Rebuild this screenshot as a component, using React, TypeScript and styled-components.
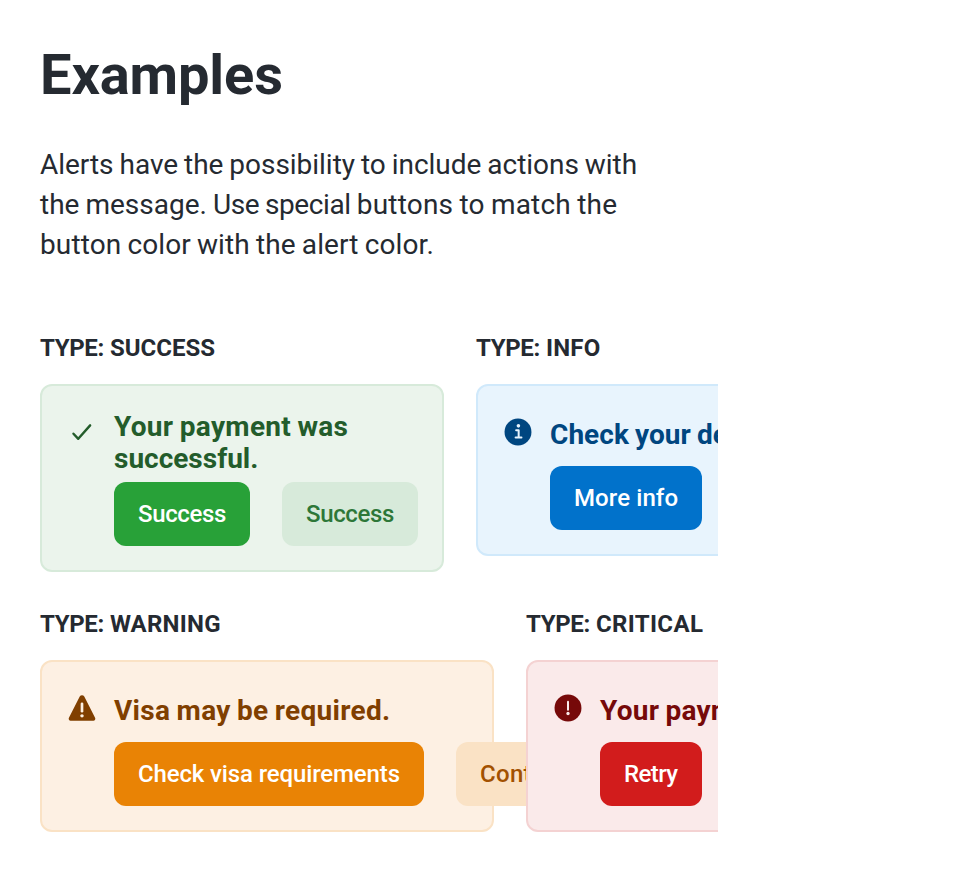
import React from 'react';
import styled, { createGlobalStyle, css } from 'styled-components';

type Kind = 'success' | 'info' | 'warning' | 'critical';

const palette: Record<
  Kind,
  { light: string; edge: string; normal: string; dark: string; darker: string }
> = {
  success: { light: '#EBF4EC', edge: '#D7EADA', normal: '#28A138', dark: '#2D7738', darker: '#235C2B' },
  info: { light: '#E8F4FD', edge: '#D0E9FB', normal: '#0172CB', dark: '#005AA3', darker: '#004680' },
  warning: { light: '#FDF0E3', edge: '#FAE2C5', normal: '#E98305', dark: '#A25100', darker: '#803F00' },
  critical: { light: '#FAEAEA', edge: '#F4D2D2', normal: '#D21C1C', dark: '#970C0C', darker: '#760909' },
};

const GlobalStyle = createGlobalStyle`
  * { box-sizing: border-box; }
  body { margin: 0; background: #fff; }
`;

const Page = styled.main`
  width: 718px;
  height: 872px;
  padding: 41px 0 40px 40px;
  overflow: hidden;
  background: #fff;
  color: #252a31;
  font-family: Roboto, sans-serif;
`;

const Heading = styled.h1`
  margin: 0 0 36px;
  font-size: 56px;
  line-height: 68px;
  font-weight: 700;
  letter-spacing: -0.12px;
`;

const Intro = styled.p`
  width: 638px;
  margin: 0 0 71px;
  font-size: 28px;
  line-height: 40px;
  word-spacing: -0.94px;
`;

const Tracked = styled.span<{ $track: number }>`
  letter-spacing: ${(p) => p.$track}px;
`;

const Row = styled.div`
  display: flex;
  align-items: flex-start;
  gap: 32px;

  & + & {
    margin-top: 40px;
  }
`;

const Example = styled.section<{ $width: number }>`
  flex: none;
  width: ${(p) => p.$width}px;
`;

const Label = styled.h2`
  margin: 0 0 24px;
  font-size: 24px;
  line-height: 24px;
  font-weight: 700;
  text-transform: uppercase;
`;

const AlertBox = styled.div<{ $kind: Kind }>`
  position: relative;
  display: flex;
  align-items: flex-start;
  gap: 16px;
  padding: 24px;
  border: 2px solid ${(p) => palette[p.$kind].edge};
  border-radius: 12px;
  background: ${(p) => palette[p.$kind].light};
  color: ${(p) => palette[p.$kind].darker};
`;

const Icon = styled.svg`
  flex: none;
  width: 32px;
  height: 32px;
  margin-top: 6px;
`;

const Content = styled.div`
  flex: 1;
  min-width: 0;
`;

const Title = styled.div`
  display: flex;
  align-items: center;
  min-height: 49px;
  margin-bottom: 7px;
  padding-top: 1px;
  font-size: 28px;
  line-height: 32px;
  font-weight: 700;
  word-spacing: -0.94px;
`;

const Actions = styled.div`
  display: flex;
  gap: 32px;
`;

const Button = styled.button<{ $kind: Kind; $width: number; $track: number; $subtle?: boolean }>`
  flex: none;
  width: ${(p) => p.$width}px;
  height: 64px;
  padding: 0 0 0 24px;
  border: 0;
  border-radius: 12px;
  font: 500 24px/32px Roboto, sans-serif;
  letter-spacing: ${(p) => p.$track}px;
  text-align: left;
  white-space: nowrap;
  ${(p) =>
    p.$subtle
      ? css`
          background: ${palette[p.$kind].edge};
          color: ${palette[p.$kind].dark};
        `
      : css`
          background: ${palette[p.$kind].normal};
          color: #fff;
        `}
`;

function KindIcon({ kind }: { kind: Kind }) {
  const { light } = palette[kind];
  return (
    <Icon viewBox="0 0 24 24" fill="currentColor" aria-hidden="true">
      {kind === 'success' && (
        <path
          d="M5.6 13.3 9.2 17.1 18.1 7"
          fill="none"
          stroke="currentColor"
          strokeWidth="1.8"
          strokeLinecap="round"
          strokeLinejoin="round"
        />
      )}
      {kind === 'info' && (
        <>
          <circle cx="12" cy="12" r="10.1" />
          <circle cx="12.3" cy="7.4" r="1.35" fill={light} />
          <path d="M10.6 10.6h1.9v5.4M10.2 16.1h4.4" fill="none" stroke={light} strokeWidth="1.5" strokeLinecap="round" strokeLinejoin="round" />
        </>
      )}
      {kind === 'warning' && (
        <>
          <path d="M10.3 3.3a2 2 0 0 1 3.4 0l8.1 16.1a1.4 1.4 0 0 1-1.25 2.1H3.45a1.4 1.4 0 0 1-1.25-2.1z" />
          <rect x="11" y="7.8" width="2" height="7.6" rx="1" fill={light} />
          <circle cx="12" cy="17.9" r="1.3" fill={light} />
        </>
      )}
      {kind === 'critical' && (
        <>
          <circle cx="12" cy="12" r="10.1" />
          <rect x="11.25" y="6.5" width="1.5" height="7.5" rx=".7" fill={light} />
          <circle cx="12" cy="16.1" r="1.25" fill={light} />
        </>
      )}
    </Icon>
  );
}

interface Action {
  label: string;
  width: number;
  track: number;
}

interface AlertProps {
  kind: Kind;
  labelTrack: number;
  width: number;
  title: React.ReactNode;
  actions: Action[];
}

function AlertExample({ kind, labelTrack, width, title, actions }: AlertProps) {
  return (
    <Example $width={width}>
      <Label>
        <Tracked $track={-0.35}>Type:</Tracked> <Tracked $track={labelTrack}>{kind}</Tracked>
      </Label>
      <AlertBox $kind={kind}>
        <KindIcon kind={kind} />
        <Content>
          <Title>
            <div>{title}</div>
          </Title>
          <Actions>
            {actions.map((a, i) => (
              <Button key={i} $kind={kind} $width={a.width} $track={a.track} $subtle={i > 0}>
                {a.label}
              </Button>
            ))}
          </Actions>
        </Content>
      </AlertBox>
    </Example>
  );
}

export default function App() {
  return (
    <>
      <GlobalStyle />
      <Page>
        <Heading>Examples</Heading>
        <Intro>
          <Tracked $track={-0.03}>Alerts have the possibility to include actions with</Tracked>{' '}
          the message. <Tracked $track={-0.38}>Use special</Tracked>{' '}
          <Tracked $track={0.2}>buttons to match the</Tracked>{' '}
          <Tracked $track={0.11}>button color with the alert color.</Tracked>
        </Intro>
        <Row>
          <AlertExample
            kind="success"
            labelTrack={0}
            width={404}
            title={
              <>
                <Tracked $track={0.31}>Your payment was</Tracked> successful.
              </>
            }
            actions={[
              { label: 'Success', width: 136, track: -0.36 },
              { label: 'Success', width: 136, track: -0.36 },
            ]}
          />
          <AlertExample
            kind="info"
            labelTrack={0.25}
            width={454}
            title={<Tracked $track={0.06}>Check your details.</Tracked>}
            actions={[{ label: 'More info', width: 152, track: 0.1 }]}
          />
        </Row>
        <Row>
          <AlertExample
            kind="warning"
            labelTrack={0.25}
            width={454}
            title={<Tracked $track={0.3}>Visa may be required.</Tracked>}
            actions={[
              { label: 'Check visa requirements', width: 310, track: -0.13 },
              { label: 'Continue', width: 142, track: 0.3 },
            ]}
          />
          <AlertExample
            kind="critical"
            labelTrack={0.37}
            width={454}
            title={<Tracked $track={0.25}>Your payment failed.</Tracked>}
            actions={[{ label: 'Retry', width: 102, track: -0.6 }]}
          />
        </Row>
      </Page>
    </>
  );
}
